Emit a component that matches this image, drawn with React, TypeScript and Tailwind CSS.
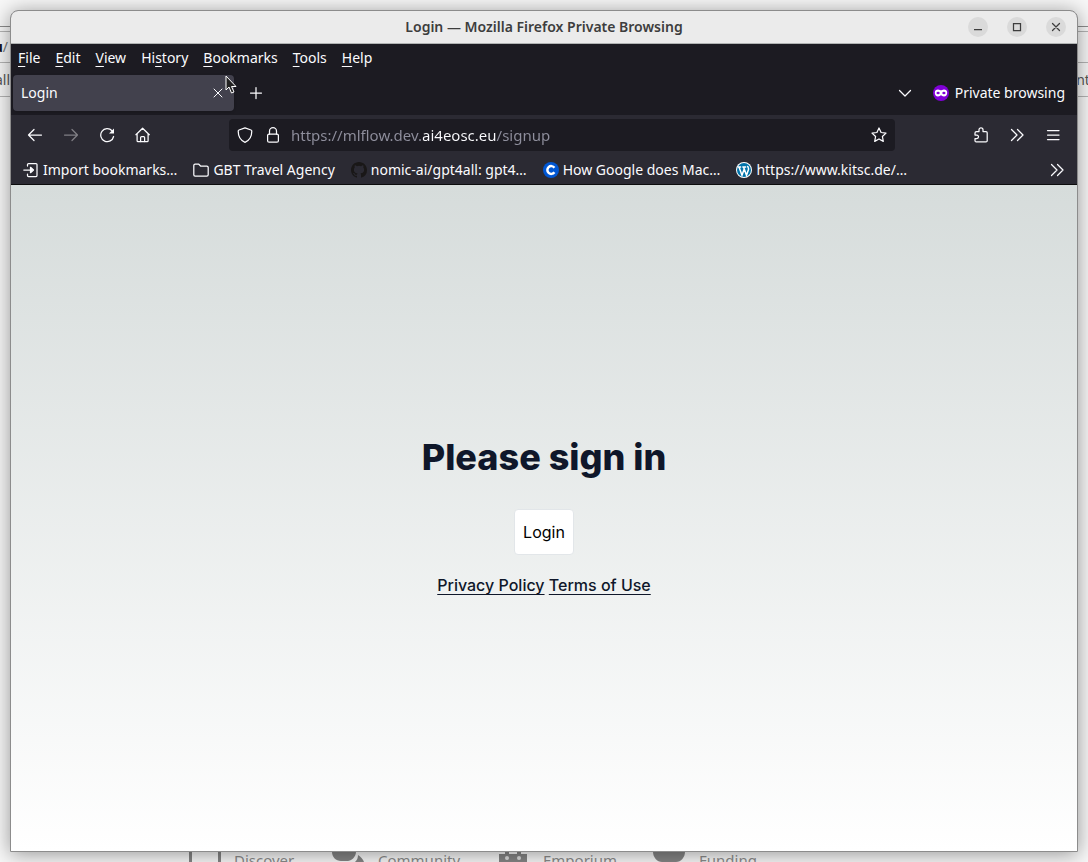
import type { ReactNode } from "react";

type IconProps = { children: ReactNode; className?: string; filled?: boolean };

function Icon({ children, className = "h-4 w-4", filled = false }: IconProps) {
  return (
    <svg
      viewBox="0 0 16 16"
      aria-hidden="true"
      className={`shrink-0 ${className}`}
      fill={filled ? "currentColor" : "none"}
      stroke={filled ? "none" : "currentColor"}
      strokeWidth="1.25"
      strokeLinecap="round"
      strokeLinejoin="round"
    >
      {children}
    </svg>
  );
}

const menus = ["File", "Edit", "View", "History", "Bookmarks", "Tools", "Help"];
const accessKeyIndex: Record<string, number> = { History: 2 };

function MenuBar() {
  return (
    <nav aria-label="Menu" className="flex h-7 items-center gap-px">
      {menus.map((name) => {
        const i = accessKeyIndex[name] ?? 0;
        return (
          <button key={name} type="button" className="px-[7px] text-sm">
            {name.slice(0, i)}
            <span className="underline underline-offset-3">{name[i]}</span>
            {name.slice(i + 1)}
          </button>
        );
      })}
    </nav>
  );
}

function TitleBar() {
  const control = "flex h-5 w-5 items-center justify-center rounded-full bg-[#dadada]";
  return (
    <header className="grid h-[33px] grid-cols-[1fr_auto_1fr] items-center border-b border-[#b0b3b3] bg-[#ebebeb] text-[#3d3d3d]">
      <span />
      <h1 className="text-sm font-semibold">Login — Mozilla Firefox Private Browsing</h1>
      <div className="flex justify-end gap-[19px] pr-[11px]">
        <button type="button" aria-label="Minimize" className={control}>
          <Icon><path d="M4 10.500h8" strokeLinecap="butt" /></Icon>
        </button>
        <button type="button" aria-label="Maximize" className={control}>
          <Icon><path d="M4.500 4.500h7v7h-7z" strokeLinejoin="miter" /></Icon>
        </button>
        <button type="button" aria-label="Close" className={control}>
          <Icon><path d="M4.500 4.500l7 7M11.500 4.500l-7 7" /></Icon>
        </button>
      </div>
    </header>
  );
}

function TabStrip() {
  return (
    <div className="flex h-[43px] items-center px-0.5 pb-0.5">
      <div className="flex h-9 w-[221px] items-center justify-between rounded bg-[#42414d] px-2 shadow">
        <span className="text-sm">Login</span>
        <button type="button" aria-label="Close tab">
          <Icon><path d="M4 4l8 8M12 4l-8 8" strokeWidth="1" /></Icon>
        </button>
      </div>
      <button type="button" aria-label="New tab" className="ml-3.5">
        <Icon><path d="M8 2.500v11M2.500 8h11" /></Icon>
      </button>
      <button type="button" aria-label="List all tabs" className="mr-5 ml-auto">
        <Icon><path d="M2.500 5.500L8 11l5.500-5.500" /></Icon>
      </button>
      <div className="flex items-center gap-1.5 pr-2.5 text-sm">
        <svg viewBox="0 0 16 16" aria-hidden="true" className="h-4 w-4">
          <circle cx="8" cy="8" r="8" fill="#8000d7" />
          <path
            d="M1.800 7.700C1.800 5.500 3.200 4.400 5 4.400c1.500 0 2.300.9 3 .9s1.500-.9 3-.9c1.800 0 3.200 1.100 3.200 3.300 0 2.300-1.300 3.900-3.200 3.900-1.600 0-2.300-1.300-3-1.300s-1.400 1.300-3 1.300c-1.900 0-3.200-1.600-3.200-3.900z"
            fill="#fff"
          />
          <ellipse cx="5.100" cy="8" rx="1.600" ry="1.200" fill="#8000d7" />
          <ellipse cx="10.900" cy="8" rx="1.600" ry="1.200" fill="#8000d7" />
        </svg>
        <span>Private browsing</span>
      </div>
    </div>
  );
}

function ToolButton({ label, dim = false, children }: { label: string; dim?: boolean; children: ReactNode }) {
  return (
    <button
      type="button"
      aria-label={label}
      className={`flex h-8 w-9 items-center justify-center ${dim ? "text-[#807f85]" : ""}`}
    >
      <Icon>{children}</Icon>
    </button>
  );
}

function NavBar() {
  return (
    <div className="flex h-10 items-center bg-[#2b2a33] px-1.5">
      <ToolButton label="Back"><path d="M14.500 8H1.500M7 2.500L1.500 8 7 13.500" /></ToolButton>
      <ToolButton label="Forward" dim><path d="M1.500 8h13M9 2.500L14.500 8 9 13.500" /></ToolButton>
      <ToolButton label="Reload">
        <path d="M14.600 9.500A6.500 6.500 0 1 1 13 3.700" />
        <path d="M15 1.500v5h-5z" fill="currentColor" stroke="none" />
      </ToolButton>
      <ToolButton label="Home">
        <path d="M.9 7.700L7.600 1.200l6.700 6.500M2.100 6.700v7c0 .6.400 1 1 1h9c.6 0 1-.4 1-1v-7" />
        <path d="M5.600 14.500v-4c0-.6.400-1 1-1h2c.6 0 1 .4 1 1v4" />
      </ToolButton>
      <div className="mx-[68px] flex h-8 min-w-0 flex-1 items-center rounded bg-[#1c1b22] px-2">
        <Icon><path d="M8 .8l6 2.200c.5.200.8.600.8 1.100 0 4.500-2.200 9.400-6.800 11.200C3.400 13.500 1.200 8.600 1.200 4.100c0-.5.300-.9.800-1.100z" /></Icon>
        <Icon className="ml-3 h-4 w-4">
          <path d="M4.500 7V4.200a3.500 3.500 0 0 1 7 0V7" />
          <rect x="2.600" y="7" width="10.800" height="8.200" rx="1.500" />
        </Icon>
        <input
          aria-label="Address"
          type="text"
          defaultValue="https://mlflow.dev.ai4eosc.eu/signup"
          className="ml-2.5 min-w-0 flex-1 bg-[linear-gradient(90deg,#8f8f9d_132px,#fbfbfe_132px,#fbfbfe_205px,#8f8f9d_205px)] bg-clip-text text-[15px] text-transparent outline-none"
        />
        <button type="button" aria-label="Bookmark this page">
          <Icon><path d="M8 1l2.100 4.500 4.900.6-3.600 3.400.9 4.900L8 12l-4.300 2.400.9-4.900L1 6.100l4.900-.6z" /></Icon>
        </button>
      </div>
      <ToolButton label="Extensions">
        <path d="M2 6c0-.8.600-1.500 1.500-1.500H6V2.800a2 2 0 0 1 4 0v1.700h3c.6 0 1.200.5 1.200 1.200v8c0 .7-.5 1.200-1.200 1.200H3.200c-.7 0-1.200-.5-1.200-1.200V11.500h1.800a1.700 1.700 0 0 0 0-3.400H2z" />
      </ToolButton>
      <ToolButton label="More tools"><path d="M2.500 2.500L8 8l-5.500 5.500M8.500 2.500L14 8l-5.500 5.500" /></ToolButton>
      <ToolButton label="Application menu"><path d="M2.500 3.500h11.500M2.500 8h11.500M2.500 12.500h11.500" /></ToolButton>
    </div>
  );
}

function Bookmark({ icon, children }: { icon: ReactNode; children: ReactNode }) {
  return (
    <a href="#" className="flex items-center gap-1 whitespace-nowrap">
      {icon}
      {children}
    </a>
  );
}

function BookmarksBar() {
  return (
    <div className="flex h-[30px] items-center gap-4 border-b border-[#0c0c0d] bg-[#2b2a33] px-3 text-sm">
      <Bookmark
        icon={
          <Icon>
            <path d="M4.500 4V2.500c0-.6.400-1 1-1h7.500c.6 0 1 .4 1 1v11c0 .6-.4 1-1 1H5.500c-.6 0-1-.4-1-1V12M.8 8H8" />
            <path d="M7.500 5.300L10.500 8l-3 2.700z" fill="currentColor" />
          </Icon>
        }
      >
        Import bookmarks…
      </Bookmark>
      <Bookmark
        icon={
          <Icon>
            <path d="M.8 3.500c0-.8.600-1.300 1.300-1.300h3.700l2 2h6c.8 0 1.400.5 1.400 1.300v7.200c0 .7-.6 1.300-1.400 1.300H2.100c-.7 0-1.300-.6-1.300-1.300z" />
          </Icon>
        }
      >
        GBT Travel Agency
      </Bookmark>
      <Bookmark
        icon={
          <Icon filled className="h-4 w-4 text-[#191717]">
            <path d="M8 0C3.580 0 0 3.580 0 8c0 3.540 2.290 6.530 5.470 7.590.4.070.55-.17.55-.38 0-.19-.01-.82-.01-1.490-2.010.37-2.530-.49-2.690-.94-.09-.23-.48-.94-.82-1.130-.28-.15-.68-.52-.01-.53.63-.01 1.080.58 1.230.82.72 1.210 1.870.87 2.330.66.07-.52.28-.87.51-1.070-1.780-.2-3.640-.89-3.640-3.950 0-.87.31-1.590.82-2.150-.08-.2-.36-1.020.08-2.120 0 0 .67-.21 2.200.82a7.600 7.600 0 0 1 4 0c1.530-1.040 2.200-.82 2.200-.82.44 1.100.16 1.920.08 2.120.51.56.82 1.270.82 2.150 0 3.070-1.870 3.750-3.650 3.950.29.25.54.73.54 1.480 0 1.070-.01 1.930-.01 2.200 0 .21.15.46.55.38A8 8 0 0 0 16 8c0-4.420-3.580-8-8-8z" />
          </Icon>
        }
      >
        nomic-ai/gpt4all: gpt4…
      </Bookmark>
      <Bookmark
        icon={
          <svg viewBox="0 0 16 16" aria-hidden="true" className="h-4 w-4 shrink-0">
            <circle cx="8" cy="8" r="8" fill="#0056d2" />
            <path d="M11.400 10.300A3.900 3.900 0 1 1 11.400 5.700" fill="none" stroke="#fff" strokeWidth="2.500" />
          </svg>
        }
      >
        How Google does Mac…
      </Bookmark>
      <Bookmark
        icon={
          <svg viewBox="0 0 16 16" aria-hidden="true" className="h-4 w-4 shrink-0">
            <circle cx="8" cy="8" r="8" fill="#fff" />
            <circle cx="8" cy="8" r="7" fill="#0073aa" />
            <path
              d="M1.800 5h3.400M6.300 5h3.900M3 5l3 8.300L8.200 7M7.500 5l3 8.300 2-5.800c.5-1.500-.9-2.200-.8-3.600"
              fill="none"
              stroke="#fff"
              strokeWidth="1.500"
            />
          </svg>
        }
      >
        https://www.kitsc.de/…
      </Bookmark>
      <button type="button" aria-label="More bookmarks" className="ml-auto">
        <Icon><path d="M2.500 2.500L8 8l-5.500 5.500M8.500 2.500L14 8l-5.500 5.500" /></Icon>
      </button>
    </div>
  );
}

function LoginPage() {
  return (
    <main className="flex flex-1 flex-col items-center justify-center bg-linear-to-b from-[#d6dcdb] to-white pb-0.5 font-[Inter,sans-serif] text-[#0f172a]">
      <h2 className="text-4xl font-extrabold">Please sign in</h2>
      <button
        type="button"
        className="mt-8 rounded border border-[#e2e6e9] bg-white px-2 py-[9px] text-base leading-[26px] text-black"
      >
        Login
      </button>
      <p className="mt-[18px] text-base font-medium">
        <a href="#" className="underline underline-offset-3">Privacy Policy</a>{" "}
        <a href="#" className="underline underline-offset-3">Terms of Use</a>
      </p>
    </main>
  );
}

function BackdropEdge({ side }: { side: "left" | "right" }) {
  return (
    <div className="flex w-2.5 shrink-0 flex-col overflow-hidden text-sm">
      <div className="h-[27px] shrink-0 border-b border-[#8c8c8c]" />
      <div className="h-[5px] shrink-0 border-b border-[#b4b4b4]" />
      <div className="flex h-[31px] shrink-0 items-center justify-end border-b border-[#b4b4b4] bg-[#f6f6f6] pr-0.5 text-[#777]">
        {side === "left" && <span><b className="text-[#15141a]">u</b>/</span>}
      </div>
      <div
        className={`flex h-[34px] shrink-0 items-center border-b border-[#b4b4b4] bg-[#f6f6f6] text-[#555] ${side === "left" ? "justify-end" : "justify-center"}`}
      >
        {side === "left" ? "all" : "nt"}
      </div>
    </div>
  );
}

function BackdropFooter() {
  return (
    <div className="flex h-2.5 shrink-0 items-start overflow-hidden pl-[189px] text-[15px] leading-4 text-[#8c8c8c]">
      <svg viewBox="0 0 32 10" aria-hidden="true" className="h-2.5 w-8 shrink-0" fill="#858585">
        <path d="M0 0h3v10H0zM29 0h3v10h-3z" />
      </svg>
      <span className="w-[97px] pl-[13px]">Discover</span>
      <svg viewBox="0 0 34 10" aria-hidden="true" className="ml-3.5 h-2.5 w-[34px] shrink-0" fill="#858585">
        <path d="M0 0h24c0 5-5 9-8 9H9C4 9 0 5 0 0zM26 3c3 2 5 4 6 7h-9c2-2 3-4 3-7z" />
      </svg>
      <span className="w-[120px] pl-3">Community</span>
      <svg viewBox="0 0 28 10" aria-hidden="true" className="ml-[13px] h-2.5 w-7 shrink-0">
        <path d="M0 2h6V0h4v2h8V0h4v2h6v8H0z" fill="#858585" />
        <circle cx="8" cy="6" r="2" fill="#ddd" />
        <circle cx="20" cy="6" r="2" fill="#ddd" />
      </svg>
      <span className="w-[110px] pl-4">Emporium</span>
      <svg viewBox="0 0 32 10" aria-hidden="true" className="ml-4 h-2.5 w-8 shrink-0" fill="#858585">
        <path d="M0 0h32c0 5-4 10-9 10H9C4 10 0 5 0 0z" />
      </svg>
      <span className="pl-3.5">Funding</span>
    </div>
  );
}

export default function App() {
  return (
    <div className="flex h-screen flex-col overflow-hidden bg-[#f7f7f7] font-['Noto_Sans',sans-serif]">
      <div className="flex min-h-0 flex-1">
        <BackdropEdge side="left" />
        <div className="relative mt-2.5 flex min-w-0 flex-1 flex-col rounded-t-lg border border-[#8c8c8c] shadow-[0_2px_20px_rgba(0,0,0,0.4)]">
          <div className="flex flex-1 flex-col overflow-hidden rounded-t-[7px] bg-[#1c1b22] text-[#fbfbfe]">
            <TitleBar />
            <MenuBar />
            <TabStrip />
            <NavBar />
            <BookmarksBar />
            <LoginPage />
          </div>
          <svg
            viewBox="0 0 12 19"
            aria-hidden="true"
            className="absolute top-16 left-[214px] h-[19px] w-3"
          >
            <path
              d="M1 1v14l3-3 2.500 6 2.500-1-2.500-5.500H11z"
              fill="#222"
              stroke="#fff"
              strokeWidth="1"
            />
          </svg>
        </div>
        <BackdropEdge side="right" />
      </div>
      <BackdropFooter />
    </div>
  );
}
